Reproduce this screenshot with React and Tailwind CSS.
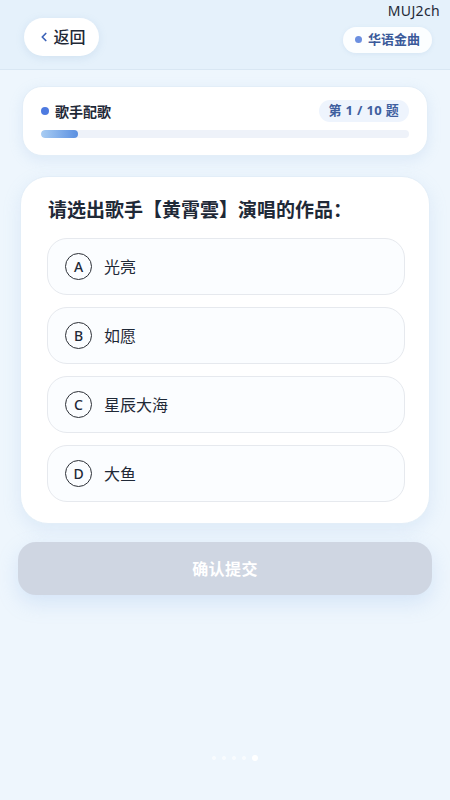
import { ChevronLeft } from 'lucide-react';

const options = [
  { key: 'A', text: '光亮' },
  { key: 'B', text: '如愿' },
  { key: 'C', text: '星辰大海' },
  { key: 'D', text: '大鱼' },
];

export default function App() {
  return (
    <div
      className="relative min-h-[800px] w-[450px] bg-[#eef6fd] overflow-hidden"
      style={{ fontFamily: '"Noto Sans", "Noto Sans CJK SC", sans-serif' }}
    >
      {/* watermark */}
      <span className="absolute right-[10px] top-[0px] text-[14px] text-[#1f2937] tracking-wide">MUJ2ch</span>

      {/* header */}
      <div className="h-[70px] bg-[#e5f1fb] border-b border-[#d9e7f3] flex items-center justify-between pl-[24px] pr-[18px]">
        <button className="h-[38px] w-[75px] rounded-full bg-white shadow-[0_2px_8px_rgba(120,160,200,0.18)] flex items-center justify-center gap-[2px] mt-[4px]">
          <ChevronLeft className="h-[14px] w-[14px] text-[#3d63b8]" strokeWidth={3} />
          <span className="text-[16px] text-[#1f2937] font-medium">返回</span>
        </button>
        <div className="h-[26px] px-[12px] rounded-full bg-white/90 shadow-[0_1px_4px_rgba(120,160,200,0.15)] flex items-center gap-[6px] mt-[10px]">
          <span className="h-[7px] w-[7px] rounded-full bg-[#6b8fe0]" />
          <span className="text-[13px] font-bold text-[#3b5a9a]">华语金曲</span>
        </div>
      </div>

      {/* progress card */}
      <div className="mx-[22px] mt-[16px] rounded-[20px] bg-white border border-[#e3eef8] shadow-[0_4px_14px_rgba(140,180,220,0.18)] pt-[13px] pb-[17px] px-[18px]">
        <div className="flex items-center justify-between">
          <div className="flex items-center gap-[6px]">
            <span className="h-[8px] w-[8px] rounded-full bg-[#4d7ae0]" />
            <span className="text-[14px] font-bold text-[#1f2937]">歌手配歌</span>
          </div>
          <div className="h-[22px] px-[10px] rounded-full bg-[#eef4fd] flex items-center">
            <span className="text-[13px] font-bold text-[#3f5f9f] tracking-wide">第 1 / 10 题</span>
          </div>
        </div>
        <div className="mt-[8px] h-[8px] rounded-full bg-[#eef2f9] overflow-hidden">
          <div className="h-full w-[10%] rounded-full bg-gradient-to-r from-[#a9cdf3] to-[#5a8fe0]" />
        </div>
      </div>

      {/* question card */}
      <div className="mx-[20px] mt-[20px] rounded-[28px] bg-white border border-[#e3eef8] shadow-[0_6px_18px_rgba(140,180,220,0.18)] pt-[21px] pb-[21px] pl-[26px] pr-[24px]">
        <h1 className="text-[19px] font-bold text-[#1f2937] pl-[1px] leading-[24px]">请选出歌手【黄霄雲】演唱的作品：</h1>
        <div className="mt-[16px] flex flex-col gap-[12px]">
          {options.map((o) => (
            <div
              key={o.key}
              className="h-[57px] rounded-[20px] border border-[#e6e9ee] bg-[#fbfdff] flex items-center pl-[17px] gap-[12px]"
            >
              <span className="h-[27px] w-[27px] rounded-full border-[1.5px] border-[#2b2f36] flex items-center justify-center text-[14px] font-medium text-[#1f2937]">
                {o.key}
              </span>
              <span className="text-[16px] text-[#1f2937]">{o.text}</span>
            </div>
          ))}
        </div>
      </div>

      {/* submit */}
      <div className="mx-[18px] mt-[18px]">
        <button className="h-[53px] w-full rounded-[18px] bg-[#cfd6e2] shadow-[0_8px_20px_rgba(140,180,230,0.25)] flex items-center justify-center">
          <span className="text-[16px] font-bold text-white tracking-wide">确认提交</span>
        </button>
      </div>

      {/* page dots */}
      <div className="mt-[160px] flex items-center justify-center gap-[6px] pl-[20px]">
        <span className="h-[4px] w-[4px] rounded-full bg-white/60" />
        <span className="h-[4px] w-[4px] rounded-full bg-white/60" />
        <span className="h-[4px] w-[4px] rounded-full bg-white/60" />
        <span className="h-[4px] w-[4px] rounded-full bg-white/60" />
        <span className="h-[6px] w-[6px] rounded-full bg-white" />
      </div>
    </div>
  );
}
